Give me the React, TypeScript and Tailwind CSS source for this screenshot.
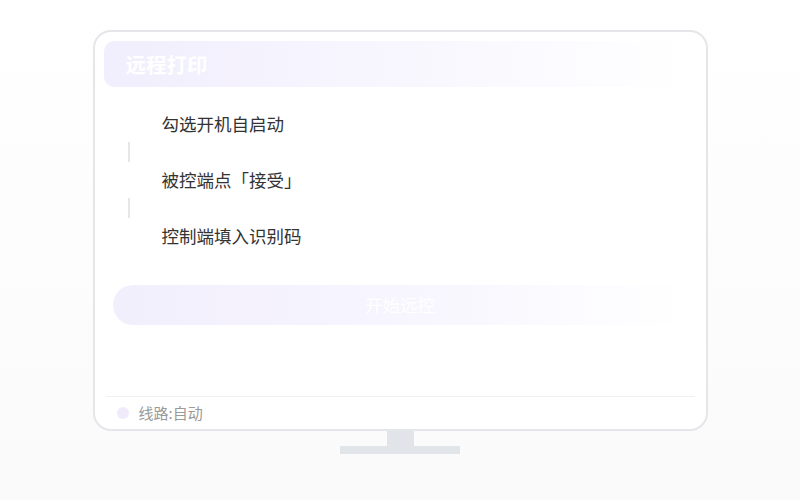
import React from 'react';

const steps = ['勾选开机自启动', '被控端点「接受」', '控制端填入识别码'];

const App = () => {
    return (
        <div
            className="w-[800px] h-[500px] bg-gradient-to-b from-white to-[#fafafa] flex flex-col items-center pt-[30px]"
            style={{ fontFamily: '"Noto Sans CJK SC", "Noto Sans", sans-serif' }}
        >
            {/* Monitor screen */}
            <div className="w-[615px] h-[401px] border-2 border-[#e4e6ea] rounded-[18px] bg-white flex flex-col px-[9px] pt-[9px]">
                {/* Title bar */}
                <div className="h-[46px] rounded-[10px] bg-gradient-to-r from-[#f1eefd] to-white flex items-center px-[22px]">
                    <span className="text-[20.5px] font-bold text-white leading-none">远程打印</span>
                </div>

                {/* Steps */}
                <div className="mt-[25px] flex flex-col">
                    {steps.map((step, index) => (
                        <div key={index} className="flex flex-col">
                            {index > 0 && (
                                <div className="h-[32px] flex items-center pl-[24px]">
                                    <div className="w-[2px] h-[20px] bg-[#e6e7eb]"></div>
                                </div>
                            )}
                            <div className="h-[24px] flex items-center pl-[58px] text-[17.5px] text-[#333333]">
                                {step}
                            </div>
                        </div>
                    ))}
                </div>

                {/* Start button */}
                <div className="mt-[37px] mx-[9px] h-[40px] rounded-full bg-gradient-to-r from-[#f2effd] via-[#f7f5fe] to-white flex items-center justify-center">
                    <span className="text-[17.5px] text-white">开始远控</span>
                </div>

                <div className="flex-1"></div>

                {/* Footer */}
                <div className="mx-[2px] h-[33px] border-t border-[#eef0f3] flex items-center pl-[11px] gap-[10px]">
                    <div className="w-[12px] h-[12px] rounded-full bg-[#efebfd]"></div>
                    <span className="text-[15px] text-[#9a9a9a]">线路:自动</span>
                </div>
            </div>

            {/* Stand */}
            <div className="w-[27px] h-[15px] bg-[#e1e4e8]"></div>
            <div className="w-[120px] h-[8px] bg-[#e1e4e8]"></div>
        </div>
    );
};

export default App;
